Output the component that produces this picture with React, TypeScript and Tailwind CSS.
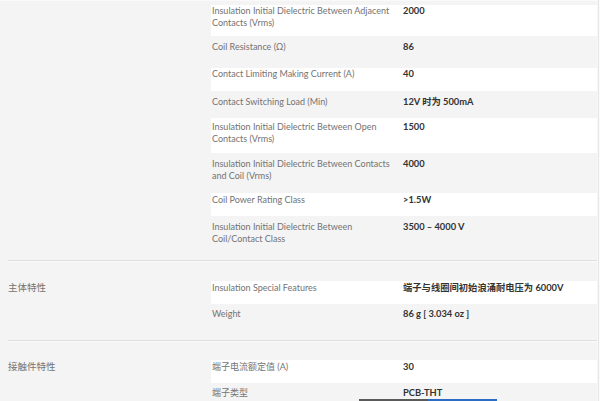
import React from "react";

type Row = { label: React.ReactNode; value: string; h: number; pt: number; white: boolean };

const sec1: Row[] = [
  { label: <>Insulation Initial Dielectric Between Adjacent<br />Contacts (Vrms)</>, value: "2000", h: 31, pt: 0, white: true },
  { label: "Coil Resistance (Ω)", value: "86", h: 32, pt: 5, white: false },
  { label: "Contact Limiting Making Current (A)", value: "40", h: 23, pt: 0, white: true },
  { label: "Contact Switching Load (Min)", value: "12V 时为 500mA", h: 27, pt: 5, white: false },
  { label: <>Insulation Initial Dielectric Between Open<br />Contacts (Vrms)</>, value: "1500", h: 35, pt: 3, white: true },
  { label: <>Insulation Initial Dielectric Between Contacts<br />and Coil (Vrms)</>, value: "4000", h: 40, pt: 5, white: false },
  { label: "Coil Power Rating Class", value: ">1.5W", h: 23, pt: 1, white: true },
  { label: <>Insulation Initial Dielectric Between<br />Coil/Contact Class</>, value: "3500 – 4000 V", h: 44, pt: 5, white: false },
];

const sec2: Row[] = [
  { label: "Insulation Special Features", value: "端子与线圈间初始浪涌耐电压为 6000V", h: 23, pt: 1, white: true },
  { label: "Weight", value: "86 g [ 3.034 oz ]", h: 36, pt: 4, white: false },
];

const sec3: Row[] = [
  { label: "端子电流额定值 (A)", value: "30", h: 23, pt: 1, white: true },
  { label: "端子类型", value: "PCB-THT", h: 30, pt: 4, white: false },
];

function Rows({ rows }: { rows: Row[] }) {
  return (
    <div className="w-[386px] flex flex-col">
      {rows.map((r, i) => (
        <div
          key={i}
          className={`flex shrink-0 ${r.white ? "bg-white" : "bg-[#f4f4f4]"}`}
          style={{ height: r.h, paddingTop: r.pt }}
        >
          <div className="w-[192px] pl-px text-[#737373] text-[9px] leading-[12px]">{r.label}</div>
          <div className="flex-1 text-[#333333] font-bold text-[9.3px] leading-[12px]">{r.value}</div>
        </div>
      ))}
    </div>
  );
}

function Separator() {
  return (
    <div className="flex h-[2px] shrink-0">
      <div className="w-[8px]" />
      <div className="flex-1 flex flex-col">
        <div className="h-px bg-[#dedede]" />
        <div className="h-px bg-[#fbfbfb]" />
      </div>
    </div>
  );
}

export default function App() {
  return (
    <div
      className="relative w-[600px] h-[401px] overflow-hidden bg-[#f4f4f4] flex"
      style={{ fontFamily: "Lato, 'Noto Sans CJK SC', sans-serif" }}
    >
      <div className="w-[597px] flex flex-col shrink-0">
        <div className="h-[5px] shrink-0 flex flex-col">
          <div className="h-px bg-[#fafafa]" />
        </div>
        <div className="flex">
          <div className="w-[211px]" />
          <Rows rows={sec1} />
        </div>
        <Separator />
        <div className="flex pt-[19px]">
          <div className="w-[211px] pl-[8px] pt-px text-[#737373] text-[9.5px] leading-[12px]">主体特性</div>
          <Rows rows={sec2} />
        </div>
        <Separator />
        <div className="flex pt-[18px]">
          <div className="w-[211px] pl-[8px] pt-px text-[#737373] text-[9.5px] leading-[12px]">接触件特性</div>
          <Rows rows={sec3} />
        </div>
      </div>
      <div className="w-px bg-[#f7f7f7]" />
      <div className="w-px bg-[#e6e6e6]" />
      <div className="w-px bg-[#fbfbfb]" />
      <div className="absolute bottom-0 left-[359px] h-[2px] w-[69px] bg-[#5a5a5a]" />
      <div className="absolute bottom-0 left-[428px] h-[2px] w-[69px] bg-[#2b6cc4]" />
    </div>
  );
}
